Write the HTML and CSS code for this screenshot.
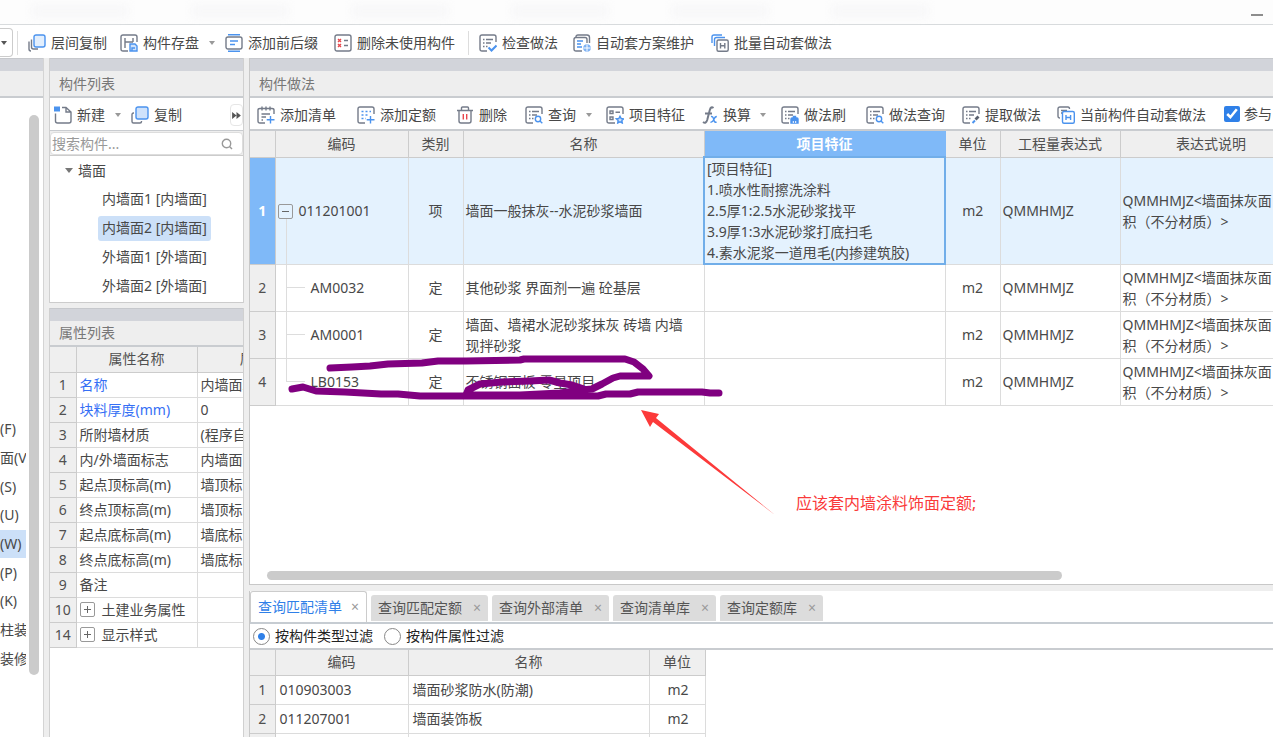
FILE: index.html
```html
<!DOCTYPE html>
<html lang="zh-CN">
<head>
<meta charset="utf-8">
<title>构件做法</title>
<link rel="stylesheet" href="styles.css">
</head>
<body>
<svg class="sprite" aria-hidden="true">
  <symbol id="i-copy" viewBox="0 0 18 18"><path d="M3 7H2.500Q1 7 1 8.500V15.500Q1 17 2.500 17H9Q10.500 17 10.500 15.500V15" class="g"/><rect x="5" y="1" width="12" height="12" rx="2" class="b f"/></symbol>
  <symbol id="i-layers" viewBox="0 0 18 18"><path d="M1 7.500V15Q1 17 3 17M3.500 5.500V13Q3.500 15 5.500 15H10" class="g"/><rect x="6" y="1" width="11" height="12" rx="2" class="b f2"/></symbol>
  <symbol id="i-save" viewBox="0 0 18 18"><path d="M8 17H3Q1 17 1 15V3Q1 1 3 1H15Q17 1 17 3V8M5 4V14M5 8H13M13 4V8" class="g"/><path d="M10 10H15L17 12V17H10ZM12 17V14H15" class="b f"/></symbol>
  <symbol id="i-affix" viewBox="0 0 18 18"><rect x="1" y="3" width="16" height="12" rx="2" class="g"/><path d="M3 .800H15M3 17.200H15M5 7H13M5 10.500H10" class="b"/></symbol>
  <symbol id="i-unused" viewBox="0 0 18 18"><rect x="1" y="1" width="16" height="16" rx="2" class="g"/><path d="M4 5L7 8M7 5L4 8M4 10L7 13M7 10L4 13" class="r"/><path d="M10 6.500H14M10 11.500H14" class="g"/></symbol>
  <symbol id="i-sheet" viewBox="0 0 18 18"><path d="M8 17H3Q1 17 1 15V3Q1 1 3 1H15Q17 1 17 3V8" class="g"/><path d="M4 5.500H5.500M7 5.500H14M4 9H5.500M7 9H12M4 12.500H5.500M7 12.500H8.500" class="g"/></symbol>
  <symbol id="i-check" viewBox="0 0 18 18"><use href="#i-sheet"/><path d="M9.500 13.500L12.500 16.500L17.500 11.500" class="b w"/></symbol>
  <symbol id="i-search" viewBox="0 0 18 18"><use href="#i-sheet"/><circle cx="13" cy="13" r="2.700" class="b"/><path d="M15 15L17.300 17.300" class="b"/></symbol>
  <symbol id="i-brush" viewBox="0 0 18 18"><use href="#i-sheet"/><path d="M10 17V13Q10 12 11 12H12.500V10.500H14.500V12H16Q17 12 17 13V17Z" class="b bf"/><path d="M12.300 17V15M14.700 17V15" class="wh"/></symbol>
  <symbol id="i-extract" viewBox="0 0 18 18"><use href="#i-sheet"/><path d="M10.500 17L13 14.500" class="b w"/><path d="M12.500 12.500L15.500 9.500L17.500 11.500L14.500 14.500Z" class="gf"/></symbol>
  <symbol id="i-plan" viewBox="0 0 18 18"><path d="M3 3Q3 1 5 1H14Q16.500 1 16.500 3.500V9" class="g"/><path d="M9 17H3Q1 17 1 15V5.500Q1 3.500 3 3.500H12Q14 3.500 14 5.500V9" class="g"/><path d="M4 7H10M4 10H8M4 13H9" class="b"/><circle cx="14" cy="14" r="3.800" class="lf"/><path d="M10.500 14H17.500M14 10.500V17.500" class="wh"/></symbol>
  <symbol id="i-batch" viewBox="0 0 18 18"><path d="M1 9V3Q1 1 3 1H11M3.500 12V5.500Q3.500 3.500 5.500 3.500H14" class="b"/><rect x="6" y="6" width="11.200" height="11.200" rx="1.500" class="g"/><path d="M9.500 9V14.500M13.800 9V14.500M9.500 11.700H13.800" class="g"/></symbol>
  <symbol id="i-auto" viewBox="0 0 18 18"><path d="M3 12Q1 12 1 10V3Q1 1 3 1H11Q12.500 1 12.500 3M4 4.500H10M4 7H5" class="g"/><rect x="5.500" y="5.500" width="11.800" height="11.800" rx="1.500" class="b"/><path d="M9 9V14M13.600 9V14M9 11.500H13.600" class="b"/></symbol>
  <symbol id="i-new" viewBox="0 0 18 18"><path d="M1.500 7.500V15Q1.500 17 3.500 17H15Q17 17 17 15V6L12 1.500H8M12 1.500V6H17" class="g"/><path d="M0 .500H6V5.500H0Z" class="bf"/></symbol>
  <symbol id="i-addlist" viewBox="0 0 18 18"><path d="M8 17H3Q1 17 1 15V4Q1 2.500 3 2.500H15Q17 2.500 17 4V8M5 .500V4.500M9 .500V4.500M13 .500V4.500M4.500 8H13M4.500 11H9M4.500 14H6" class="g"/><path d="M13.500 10V17.500M9.700 13.800H17.500" class="b"/></symbol>
  <symbol id="i-addquota" viewBox="0 0 18 18"><path d="M8 17H3Q1 17 1 15V3Q1 1 3 1H15Q17 1 17 3V8" class="g"/><path d="M4.500 5.500H14M4.500 9H12M4.500 12.500H9" class="b dots"/><path d="M13.500 10V17.500M9.700 13.800H17.500" class="b"/></symbol>
  <symbol id="i-trash" viewBox="0 0 18 18"><path d="M1 4.500H17M5.500 4V2Q5.500 1 6.500 1H11.500Q12.500 1 12.500 2V4M3 4.500V15Q3 17 5 17H13Q15 17 15 15V4.500" class="g"/><path d="M7.300 8V13.500M10.700 8V13.500" class="r"/></symbol>
  <symbol id="i-feature" viewBox="0 0 18 18"><path d="M9 17H3Q1 17 1 15V3Q1 1 3 1H15Q17 1 17 3V8" class="g"/><path d="M4 5H7V7.500H4ZM4 11H7V13.500H4ZM9.500 6.300H14" class="g"/><path d="M14 10.200L15.200 12.500L17.700 12.800L15.900 14.500L16.300 17L14 15.900L11.700 17L12.100 14.500L10.300 12.800L12.800 12.500Z" class="b f"/></symbol>
  <symbol id="i-fx" viewBox="0 0 18 18"><path d="M12.500 2Q10 0 8.800 4L6.200 14Q5 18 2 16M4 7.500H11" class="g w"/><path d="M10 10.500Q12 10 12.700 13.500Q13.500 17 15.500 16M15.800 10.500Q14 10.500 12.800 13.500Q11.500 16.500 9.500 16.300" class="b"/></symbol>
  <symbol id="i-lens" viewBox="0 0 12 12"><circle cx="5.500" cy="5.500" r="4.200" class="s"/><path d="M8.500 8.500L11 11" class="s"/></symbol>
</svg>

<header class="titlebar">
  <div class="ghosts"><i></i><i></i><i></i><i></i><i></i><i></i></div>
  <button class="minimize" aria-label="最小化"></button>
</header>

<nav class="toolbar toolbar-main">
  <button class="combo" aria-label="展开"><span class="caret dark"></span></button>
  <span class="divider"></span>
  <button class="tool"><svg><use href="#i-layers"/></svg>层间复制</button>
  <button class="tool"><svg><use href="#i-save"/></svg>构件存盘<span class="caret"></span></button>
  <button class="tool"><svg><use href="#i-affix"/></svg>添加前后缀</button>
  <button class="tool"><svg><use href="#i-unused"/></svg>删除未使用构件</button>
  <span class="divider"></span>
  <button class="tool"><svg><use href="#i-check"/></svg>检查做法</button>
  <button class="tool"><svg><use href="#i-plan"/></svg>自动套方案维护</button>
  <button class="tool"><svg><use href="#i-batch"/></svg>批量自动套做法</button>
</nav>

<main class="workspace">
  <aside class="panel modules">
    <div class="band"></div>
    <div class="heading"></div>
    <div class="modules-body">
      <ul class="modules-list">
        <li>(F)</li><li>面(V)</li><li>(S)</li><li>(U)</li><li class="current">(W)</li><li>(P)</li><li>(K)</li><li>柱装</li><li>装修</li>
      </ul>
      <div class="vbar"></div>
    </div>
  </aside>

  <section class="side">
    <div class="panel components">
      <div class="band"></div>
      <h2 class="heading">构件列表</h2>
      <div class="toolbar toolbar-components">
        <button class="tool"><svg><use href="#i-new"/></svg>新建<span class="caret"></span></button>
        <button class="tool"><svg><use href="#i-copy"/></svg>复制</button>
        <button class="more" aria-label="更多"><svg viewBox="0 0 10 8"><path d="M0 0L5 4L0 8ZM5 0L10 4L5 8Z"/></svg></button>
      </div>
      <label class="search"><input type="text" placeholder="搜索构件..." aria-label="搜索构件"><svg><use href="#i-lens"/></svg></label>
      <div class="tree">
        <div class="tree-root"><span class="caret"></span>墙面</div>
        <ul>
          <li><span>内墙面1 [内墙面]</span></li>
          <li><span class="selected">内墙面2 [内墙面]</span></li>
          <li><span>外墙面1 [外墙面]</span></li>
          <li><span>外墙面2 [外墙面]</span></li>
        </ul>
      </div>
    </div>
    <div class="panel properties">
      <div class="band"></div>
      <h2 class="heading">属性列表</h2>
      <table class="grid props">
        <colgroup><col class="p-no"><col class="p-name"><col class="p-value"></colgroup>
        <thead><tr><th></th><th>属性名称</th><th>属性值</th></tr></thead>
        <tbody>
          <tr><th>1</th><td class="link">名称</td><td>内墙面2</td></tr>
          <tr><th>2</th><td class="link">块料厚度(mm)</td><td>0</td></tr>
          <tr><th>3</th><td>所附墙材质</td><td>(程序自动判断)</td></tr>
          <tr><th>4</th><td>内/外墙面标志</td><td>内墙面</td></tr>
          <tr><th>5</th><td>起点顶标高(m)</td><td>墙顶标高</td></tr>
          <tr><th>6</th><td>终点顶标高(m)</td><td>墙顶标高</td></tr>
          <tr><th>7</th><td>起点底标高(m)</td><td>墙底标高</td></tr>
          <tr><th>8</th><td>终点底标高(m)</td><td>墙底标高</td></tr>
          <tr><th>9</th><td>备注</td><td></td></tr>
          <tr><th>10</th><td><button class="expander plus" aria-label="展开"></button>土建业务属性</td><td></td></tr>
          <tr><th>14</th><td><button class="expander plus" aria-label="展开"></button>显示样式</td><td></td></tr>
        </tbody>
      </table>
    </div>
  </section>

  <section class="content">
    <div class="panel methods">
      <div class="band"></div>
      <h2 class="heading">构件做法</h2>
      <div class="toolbar toolbar-methods">
        <button class="tool"><svg><use href="#i-addlist"/></svg>添加清单</button>
        <button class="tool"><svg><use href="#i-addquota"/></svg>添加定额</button>
        <button class="tool"><svg><use href="#i-trash"/></svg>删除</button>
        <button class="tool"><svg><use href="#i-search"/></svg>查询<span class="caret"></span></button>
        <button class="tool"><svg><use href="#i-feature"/></svg>项目特征</button>
        <button class="tool tight"><svg><use href="#i-fx"/></svg>换算<span class="caret"></span></button>
        <button class="tool"><svg><use href="#i-brush"/></svg>做法刷</button>
        <button class="tool"><svg><use href="#i-search"/></svg>做法查询</button>
        <button class="tool"><svg><use href="#i-extract"/></svg>提取做法</button>
        <button class="tool"><svg><use href="#i-auto"/></svg>当前构件自动套做法</button>
        <label class="option"><input type="checkbox" checked>参与</label>
      </div>
      <table class="grid quota">
        <colgroup><col class="q-no"><col class="q-code"><col class="q-unit"><col class="q-text"><col class="q-text"><col class="q-unit"><col class="q-expr"><col class="q-note"></colgroup>
        <thead><tr><th></th><th>编码</th><th>类别</th><th>名称</th><th class="active">项目特征</th><th>单位</th><th>工程量表达式</th><th>表达式说明</th></tr></thead>
        <tbody>
          <tr class="selected-row"><th>1</th><td class="parent"><button class="expander minus" aria-label="折叠"></button>011201001</td><td class="mid">项</td><td>墙面一般抹灰--水泥砂浆墙面</td><td class="editing">[项目特征]<br>1.喷水性耐擦洗涂料<br>2.5厚1:2.5水泥砂浆找平<br>3.9厚1:3水泥砂浆打底扫毛<br>4.素水泥浆一道甩毛(内掺建筑胶)</td><td class="mid">m2</td><td>QMMHMJZ</td><td>QMMHMJZ&lt;墙面抹灰面<br>积（不分材质）&gt;</td></tr>
          <tr><th>2</th><td class="child">AM0032</td><td class="mid">定</td><td>其他砂浆 界面剂一遍 砼基层</td><td></td><td class="mid">m2</td><td>QMMHMJZ</td><td>QMMHMJZ&lt;墙面抹灰面<br>积（不分材质）&gt;</td></tr>
          <tr><th>3</th><td class="child">AM0001</td><td class="mid">定</td><td>墙面、墙裙水泥砂浆抹灰 砖墙 内墙 现拌砂浆</td><td></td><td class="mid">m2</td><td>QMMHMJZ</td><td>QMMHMJZ&lt;墙面抹灰面<br>积（不分材质）&gt;</td></tr>
          <tr><th>4</th><td class="child last">LB0153</td><td class="mid">定</td><td>不锈钢面板 零星项目</td><td></td><td class="mid">m2</td><td>QMMHMJZ</td><td>QMMHMJZ&lt;墙面抹灰面<br>积（不分材质）&gt;</td></tr>
        </tbody>
      </table>
      <div class="hbar-track"><div class="hbar"></div></div>
    </div>

    <div class="query">
      <div class="tabs">
        <button class="tab on">查询匹配清单<span>×</span></button>
        <button class="tab">查询匹配定额<span>×</span></button>
        <button class="tab">查询外部清单<span>×</span></button>
        <button class="tab">查询清单库<span>×</span></button>
        <button class="tab">查询定额库<span>×</span></button>
      </div>
      <div class="filters">
        <label><input type="radio" name="filter" checked>按构件类型过滤</label>
        <label><input type="radio" name="filter">按构件属性过滤</label>
      </div>
      <table class="grid matches">
        <colgroup><col class="m-no"><col class="q-code"><col class="q-text"><col class="m-unit"></colgroup>
        <thead><tr><th></th><th>编码</th><th>名称</th><th>单位</th></tr></thead>
        <tbody>
          <tr><th>1</th><td>010903003</td><td>墙面砂浆防水(防潮)</td><td class="mid">m2</td></tr>
          <tr><th>2</th><td>011207001</td><td>墙面装饰板</td><td class="mid">m2</td></tr>
          <tr><th></th><td></td><td></td><td></td></tr>
        </tbody>
      </table>
    </div>
  </section>
</main>

<svg class="markup" width="1273" height="737" viewBox="0 0 1273 737" aria-hidden="true">
  <g class="pen">
    <path d="M330 368L352 367L370 366L388 364L422 363L438 361L466 361L520 360L524 359H625L634 362L643 369L649 376H620L613 378L602 384L592 389L582 390L560 393L520 395H466L468 390L480 384L502 382L530 381L549 380L560 383L572 385L584 389"/>
    <path d="M292 389L303 387L316 391L345 392L381 394L398 394L420 396H598L606 394H630L638 392H702L710 393H719"/>
  </g>
  <path class="arrow" d="M641 410L659 414L656 418L775 515L653 422L650 427Z"/>
</svg>
<p class="remark">应该套内墙涂料饰面定额;</p>
</body>
</html>
```
FILE: styles.css
```css
* { box-sizing: border-box; }

html, body { height: 100%; }

body {
  margin: 0;
  display: flex;
  flex-direction: column;
  position: relative;
  overflow: hidden;
  background: #eee;
  color: #484848;
  font: 14px/20px "Noto Sans", "Noto Sans CJK SC", sans-serif;
}

button, input { font: inherit; color: inherit; }
button { margin: 0; padding: 0; border: 0; background: none; }
ul { margin: 0; padding: 0; list-style: none; }

.sprite { position: absolute; width: 0; height: 0; }
.g, .b, .r, .s, .wh { fill: none; stroke-width: 1.4; }
.g { stroke: #747b89; }
.b { stroke: #4b93ee; }
.r { stroke: #e8474c; }
.s { stroke: #999; }
.wh { stroke: #fff; stroke-width: 1; }
.w { stroke-width: 2; }
.f { fill: #cfe2fb; }
.f2 { fill: #e3effd; }
.bf { fill: #4b93ee; }
.lf { fill: #7fb2f3; }
.gf { fill: #59606e; }
.dots { stroke-dasharray: 2 2; }

/* title bar */
.titlebar {
  flex: none;
  display: flex;
  justify-content: space-between;
  height: 25px;
  background: #fdfdfd;
  border-bottom: 1px solid #d8dbdd;
}
.ghosts { display: flex; gap: 64px; padding: 5px 32px; filter: blur(5px); }
.ghosts i { width: 96px; height: 12px; background: #f7f7f8; }
.minimize { width: 12px; height: 2px; margin: 14px 10px 0 0; background: #8d8d8d; }

/* toolbars */
.toolbar { flex: none; display: grid; align-items: center; background: #fff; overflow: hidden; }
.toolbar-main {
  height: 33px;
  grid-template-columns: 13px 15px 92px 105px 109px 134px 11px 94px 138px auto;
  justify-content: start;
  padding-top: 2px;
}
.tool { display: flex; align-items: center; gap: 5px; white-space: nowrap; }
.tool svg { flex: none; width: 18px; height: 18px; }
.tight { gap: 4px; }
.caret {
  width: 0;
  height: 0;
  margin-left: 5px;
  border: 3px solid transparent;
  border-top: 4px solid #999;
  border-bottom: 0;
}
.caret.dark { margin: 0; border-top-color: #555; }
.combo {
  display: flex;
  align-items: center;
  height: 29px;
  padding-left: 1px;
  border: 1px solid #ccc;
  border-left: 0;
  border-radius: 0 4px 4px 0;
}
.divider { width: 1px; height: 24px; background: #ddd; }
.toolbar-main .combo + .divider { margin-left: 4px; }

/* work area */
.workspace { flex: 1; min-height: 0; display: flex; gap: 5px; }
.panel { display: flex; flex-direction: column; min-height: 0; }
.band { flex: none; height: 13px; background: #d2d4da; border-top: 1px solid #c6c8cc; }
.heading {
  flex: none;
  height: 27px;
  margin: 0;
  padding: 3px 9px 0;
  border-bottom: 2px solid #c9ccd0;
  background: #eee;
  color: #777;
  font-size: 14px;
  font-weight: 400;
}

.modules { flex: none; width: 44px; border-right: 1px solid #d4d4d4; }
.modules-body {
  flex: 1;
  display: grid;
  grid-template-columns: 26px 10px;
  column-gap: 3px;
  padding: 17px 0 62px;
  background: #fff;
}
.modules-list { align-self: end; height: 260px; padding-bottom: 2px; display: grid; grid-auto-rows: 1fr; overflow: hidden; white-space: nowrap; }
.modules-list li { display: flex; align-items: center; }
.modules-list .current { background: #cce0f8; }
.vbar { border-radius: 5px; background: #cbcbcb; }

.side { flex: none; width: 195px; display: flex; flex-direction: column; gap: 5px; }
.components, .properties { border: solid #d0d0d0; border-width: 0 1px; }
.toolbar-components {
  height: 33px;
  grid-template-columns: 77px 1fr 13px;
  padding: 2px 0 0 4px;
  border-bottom: 1px solid #c9ccd0;
}
.more { height: 22px; border: 1px solid #e6e6e6; border-radius: 4px; }
.more svg { display: block; width: 9px; height: 7px; margin: auto; fill: #555; }
.search {
  display: flex;
  align-items: center;
  height: 23px;
  margin-top: 1px;
  padding-right: 9px;
  border: 1px solid #ddd;
  border-radius: 4px;
  background: #fff;
}
.search input { flex: 1; min-width: 0; height: 20px; padding: 0 1px; border: 0; outline: 0; background: none; }
.search input::placeholder { color: #999; opacity: 1; }
.search svg { width: 12px; height: 12px; }
.tree { height: 148px; border: solid #ccc; border-width: 1px 0; background: #fff; white-space: nowrap; }
.tree-root { display: flex; align-items: center; gap: 5px; height: 29px; padding-left: 10px; }
.tree-root .caret { border-width: 5px 4px 0; border-top-color: #777; }
.tree li { display: flex; align-items: center; height: 29px; padding-left: 48px; }
.tree li span { padding: 2px 4px 3px; border-radius: 3px; }
.tree .selected { background: #cce0f8; }
.properties { flex: 1; overflow: hidden; background: #fff; }
.properties .heading { height: 26px; padding-top: 2px; }

/* grids */
.grid { flex: none; table-layout: fixed; border-collapse: collapse; background: #fff; }
.grid th { padding: 0; border: 1px solid #ccc; background: #efefef; font-weight: 400; text-align: center; color: #505050; }
.grid td { padding: 0 2px; border: 1px solid #dcdcdc; white-space: nowrap; overflow: hidden; }
.grid tr > :first-child { border-left: 0; }
.grid thead th { border-top: 0; }
.grid .mid { text-align: center; }

.props { width: 275px; }
.props tr { height: 25px; }
.props td { padding-left: 3px; }
.p-no { width: 26px; }
.p-name { width: 121px; }
.props .link { color: #356ff5; }

.expander {
  display: inline-block;
  width: 15px;
  height: 15px;
  margin-right: 6px;
  border: 1px solid #999;
  border-radius: 2px;
  vertical-align: -2px;
}
.minus { background: linear-gradient(#666, #666) center / 7px 1px no-repeat; }
.plus {
  margin: 0 7px 0 0;
  background:
    linear-gradient(#666, #666) center / 7px 1px no-repeat,
    linear-gradient(#666, #666) center / 1px 7px no-repeat;
}
.plus { vertical-align: -1px; }

.content { flex: 1; min-width: 0; display: flex; flex-direction: column; gap: 6px; }
.methods { flex: 1; overflow: hidden; border: solid #c8c8c8; border-width: 0 0 1px 1px; background: #fff; }
.toolbar-methods {
  height: 33px;
  grid-template-columns: 100px 99px 69px 81px 95px 80px 85px 96px 95px 167px auto;
  justify-content: start;
  padding: 2px 0 0 7px;
  border-bottom: 2px solid #c9ccd0;
}
.option { display: flex; align-items: center; gap: 4px; padding-bottom: 2px; white-space: nowrap; }
.option input { width: 16px; height: 16px; margin: 0; accent-color: #2f80e8; }

.quota { width: 1052px; line-height: 21px; }
.quota thead tr { height: 26px; }
.quota tbody tr { height: 47px; }
.quota .selected-row { height: 107px; }
.quota td:nth-child(4) { padding-right: 12px; white-space: normal; }
.q-no { width: 25px; }
.q-code { width: 133px; }
.q-unit { width: 55px; }
.q-text { width: 241px; }
.q-expr { width: 120px; }
.q-note { width: 182px; }
.quota .active { border-color: #7fb9f8; background: #7fb9f8; color: #fff; font-weight: 700; }
.selected-row td { background-color: #e4f2fe; }
.quota .selected-row th { background: #7fb9f8; color: #fff; font-weight: 700; }
.grid .editing { border: 2px solid #71aee9; }
.quota .parent { background-image: linear-gradient(#ddd, #ddd); background-size: 1px 46px; background-position: 10px 100%; background-repeat: no-repeat; }
.quota .child {
  padding-left: 35px;
  background:
    linear-gradient(#ddd, #ddd) 10px 0 / 1px 100% no-repeat,
    linear-gradient(#ddd, #ddd) 10px 50% / 19px 1px no-repeat;
}
.quota .last {
  background:
    linear-gradient(#ddd, #ddd) 10px 0 / 1px 50% no-repeat,
    linear-gradient(#ddd, #ddd) 10px 50% / 19px 1px no-repeat;
}

.hbar-track { margin-top: auto; padding: 0 211px 4px 17px; }
.hbar { height: 9px; border-radius: 5px; background: #cbcbcb; }

/* query pane */
.query { flex: none; height: 146px; overflow: hidden; border-left: 1px solid #c8c8c8; background: #fff; }
.tabs {
  display: flex;
  align-items: flex-end;
  gap: 4px;
  height: 33px;
  border-bottom: 2px solid #c6ccd2;
}
.tab {
  display: flex;
  align-items: center;
  justify-content: space-between;
  width: 117px;
  height: 26px;
  margin-bottom: 1px;
  padding: 0 7px;
  border-radius: 3px 3px 0 0;
  background: #dcdcdc;
  color: #555;
  white-space: nowrap;
}
.tab:nth-child(n+4) { width: 103px; }
.tab.on { height: 31px; margin-bottom: 0; border: 1px solid #ccc; border-bottom: 0; background: #fff; color: #2f80e8; }
.tab span { color: #999; }
.filters { display: flex; align-items: center; gap: 11px; height: 26px; padding-left: 3px; border-bottom: 2px solid #c9ccd0; color: #222; }
.filters label { display: flex; align-items: center; gap: 5px; }
.filters input {
  appearance: none;
  width: 17px;
  height: 17px;
  margin: 0;
  border: 1px solid #888;
  border-radius: 50%;
  background: #fff;
}
.filters input:checked { background: radial-gradient(#2f80e8 0 3px, #fff 4px); }
.matches { width: 455px; }
.matches thead tr { height: 25px; }
.matches tbody tr { height: 29px; }
.matches td { padding-left: 4px; }
.m-no { width: 25px; }
.m-unit { width: 56px; }

/* review marks over the window */
.markup { position: absolute; left: 0; top: 0; pointer-events: none; }
.pen { fill: none; stroke: #800080; stroke-width: 7; stroke-linecap: round; stroke-linejoin: round; }
.arrow { fill: #fc3a3a; }
.remark { position: absolute; left: 796px; top: 491px; margin: 0; color: #fa3a3a; font-size: 16px; line-height: 24px; }
```
